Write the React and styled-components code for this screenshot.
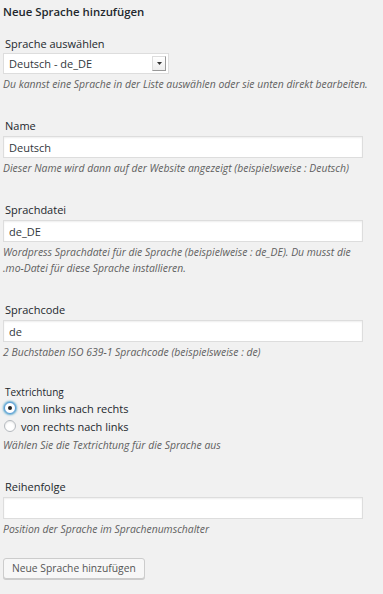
import React from "react";
import styled, { createGlobalStyle } from "styled-components";

const Global = createGlobalStyle`
  html, body { margin: 0; padding: 0; background: #f1f1f1; }
  body { font-family: "Open Sans", "Noto Sans", sans-serif; color: #23282d; }
`;

const Page = styled.div`
  width: 383px;
  min-height: 594px;
  padding: 0 0 0 3px;
  box-sizing: border-box;
`;

const Heading = styled.h3`
  margin: 0 0 12px 0;
  font-size: 11.4px;
  font-weight: 600;
  line-height: 23px;
  color: #23282d;
`;

const Field = styled.div`
  display: flex;
  flex-direction: column;
  align-items: flex-start;
  margin-bottom: ${(p) => p.$gap ?? 25}px;
`;

const Label = styled.label`
  display: block;
  font-size: ${(p) => (p.$small ? 10 : 11)}px;
  line-height: ${(p) => (p.$small ? 14 : 18)}px;
  padding-left: 2px;
  color: #23282d;
`;

const Input = styled.input`
  box-sizing: border-box;
  width: 360px;
  height: 22px;
  margin: 1px 0 0 0;
  padding: 0 5px;
  border: 1px solid #ddd;
  background: #fff;
  box-shadow: inset 0 1px 2px rgba(0, 0, 0, 0.07);
  font-family: inherit;
  font-size: 11px;
  color: #32373c;
  outline: none;
`;

const Hint = styled.p`
  margin: 2px 0 0 0;
  font-size: 10.4px;
  line-height: 16px;
  font-style: italic;
  color: #5f5f5f;
  max-width: 370px;
`;

const SelectBox = styled.div`
  box-sizing: border-box;
  width: 166px;
  height: 21px;
  display: flex;
  align-items: center;
  justify-content: space-between;
  border: 1px solid #ddd;
  background: #fff;
  padding: 0 2px 0 5px;
  font-size: 11px;
  color: #32373c;
`;

const ArrowButton = styled.span`
  box-sizing: border-box;
  width: 14px;
  height: 15px;
  display: flex;
  align-items: center;
  justify-content: center;
  border: 1px solid #ddd;
  border-right-color: #999;
  border-bottom-color: #999;
  background: linear-gradient(#fff, #ededed);
`;

const RadioRow = styled.label`
  display: flex;
  align-items: center;
  height: 18px;
  padding-left: 1px;
  font-size: 11px;
  color: #23282d;
`;

const RadioDot = styled.span`
  box-sizing: border-box;
  width: 12px;
  height: 12px;
  border-radius: 50%;
  margin-right: 5px;
  border: 1px solid ${(p) => (p.$checked ? "#5b9dd9" : "#b4b9be")};
  background: #fff;
  box-shadow: ${(p) =>
    p.$checked
      ? "0 0 2px 1px rgba(30,140,190,.7)"
      : "inset 0 1px 2px rgba(0,0,0,.1)"};
  display: flex;
  align-items: center;
  justify-content: center;
  &::after {
    content: "";
    display: ${(p) => (p.$checked ? "block" : "none")};
    width: 4px;
    height: 4px;
    border-radius: 50%;
    background: #222;
  }
`;

const Button = styled.button`
  box-sizing: border-box;
  height: 21px;
  padding: 0 8px;
  white-space: nowrap;
  border: 1px solid #ccc;
  border-radius: 3px;
  background: #f7f7f7;
  box-shadow: 0 1px 0 #ccc;
  font-family: inherit;
  font-size: 10.3px;
  color: #555;
`;

export default function App() {
  return (
    <Page>
      <Global />
      <Heading>Neue Sprache hinzufügen</Heading>
      <Field>
        <Label>Sprache auswählen</Label>
        <SelectBox>
          <span>Deutsch - de_DE</span>
          <ArrowButton>
            <svg width="5" height="3" viewBox="0 0 5 3">
              <path d="M0 0 L5 0 L2.5 3 Z" fill="#333" />
            </svg>
          </ArrowButton>
        </SelectBox>
        <Hint>
          Du kannst eine Sprache in der Liste auswählen oder sie unten direkt
          bearbeiten.
        </Hint>
      </Field>
      <Field>
        <Label>Name</Label>
        <Input defaultValue="Deutsch" />
        <Hint>
          Dieser Name wird dann auf der Website angezeigt (beispielsweise :
          Deutsch)
        </Hint>
      </Field>
      <Field>
        <Label>Sprachdatei</Label>
        <Input defaultValue="de_DE" />
        <Hint>
          Wordpress Sprachdatei für die Sprache (beispielweise : de_DE). Du
          musst die .mo-Datei für diese Sprache installieren.
        </Hint>
      </Field>
      <Field>
        <Label>Sprachcode</Label>
        <Input defaultValue="de" />
        <Hint>2 Buchstaben ISO 639-1 Sprachcode (beispielsweise : de)</Hint>
      </Field>
      <Field>
        <Label $small>Textrichtung</Label>
        <RadioRow>
          <RadioDot $checked />
          von links nach rechts
        </RadioRow>
        <RadioRow>
          <RadioDot />
          von rechts nach links
        </RadioRow>
        <Hint>Wählen Sie die Textrichtung für die Sprache aus</Hint>
      </Field>
      <Field $gap={18}>
        <Label>Reihenfolge</Label>
        <Input defaultValue="" />
        <Hint>Position der Sprache im Sprachenumschalter</Hint>
      </Field>
      <Button>Neue Sprache hinzufügen</Button>
    </Page>
  );
}
